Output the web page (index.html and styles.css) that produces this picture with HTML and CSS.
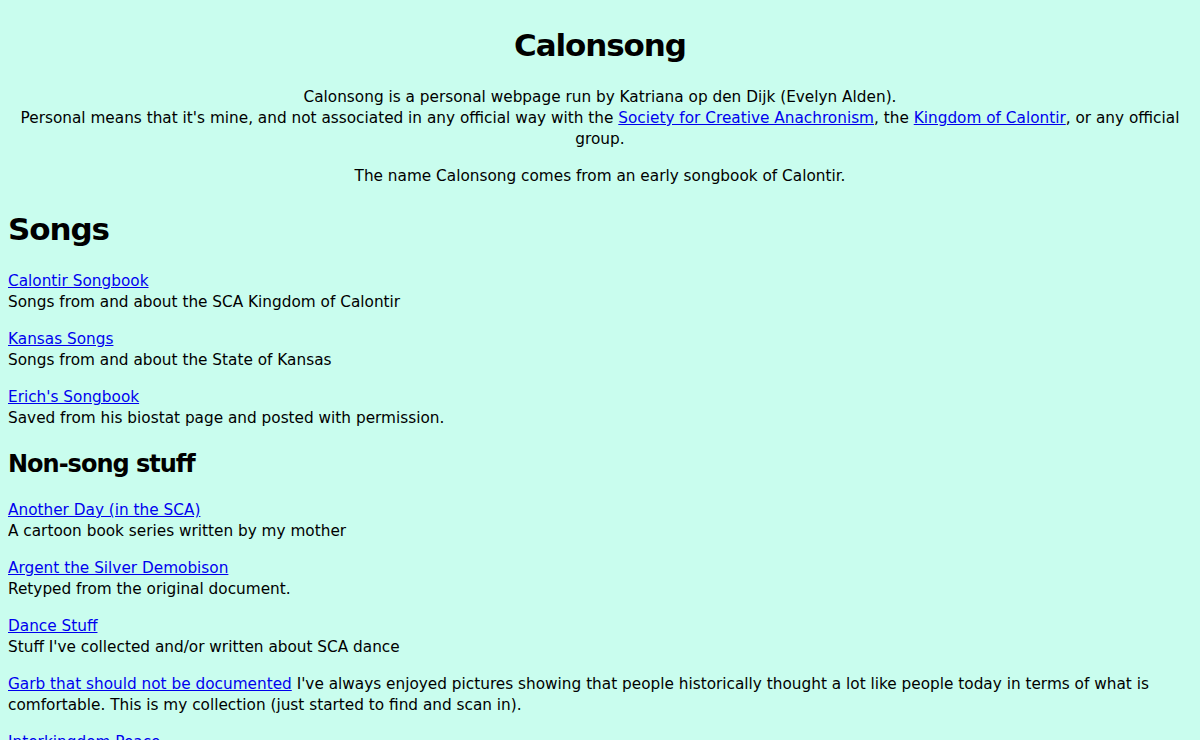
FILE: index.html
```html
<!DOCTYPE html>
<html lang="en">
<head>
<meta charset="utf-8">
<title>Calonsong</title>
<link rel="stylesheet" href="styles.css">
</head>
<body>
<h1 class="title">Calonsong</h1>
<p class="intro">Calonsong is a personal webpage run by Katriana op den Dijk (Evelyn Alden).<br>Personal means that it's mine, and not associated in any official way with the <a href="#">Society for Creative Anachronism</a>, the <a href="#">Kingdom of Calontir</a>, or any official group.</p>
<p class="intro">The name Calonsong comes from an early songbook of Calontir.</p>

<h1>Songs</h1>
<p><a href="#">Calontir Songbook</a><br>Songs from and about the SCA Kingdom of Calontir</p>
<p><a href="#">Kansas Songs</a><br>Songs from and about the State of Kansas</p>
<p><a href="#">Erich's Songbook</a><br>Saved from his biostat page and posted with permission.</p>

<h2>Non-song stuff</h2>
<p><a href="#">Another Day (in the SCA)</a><br>A cartoon book series written by my mother</p>
<p><a href="#">Argent the Silver Demobison</a><br>Retyped from the original document.</p>
<p><a href="#">Dance Stuff</a><br>Stuff I've collected and/or written about SCA dance</p>
<p><a href="#">Garb that should not be documented</a> I've always enjoyed pictures showing that people historically thought a lot like people today in terms of what is comfortable. This is my collection (just started to find and scan in).</p>
<p><a href="#">Interkingdom Peace</a><br>Notes and documents.</p>
</body>
</html>
```
FILE: styles.css
```css
html, body {
  background: #c9fdee;
}
body {
  margin: 8px;
  font-family: "DejaVu Sans", sans-serif;
  font-size: 15.3px;
  line-height: 21px;
  color: #000;
}
h1 {
  font-size: 31px;
  line-height: 42px;
  letter-spacing: -1.1px;
  margin: 21px 0;
  font-weight: bold;
}
h2 {
  font-size: 24px;
  line-height: 31px;
  letter-spacing: -1px;
  margin: 20px 0;
  font-weight: bold;
}
.title {
  text-align: center;
  margin-top: 16px;
}
.intro {
  text-align: center;
}
p {
  margin: 16px 0;
}
a {
  color: #0000ee;
}
```
